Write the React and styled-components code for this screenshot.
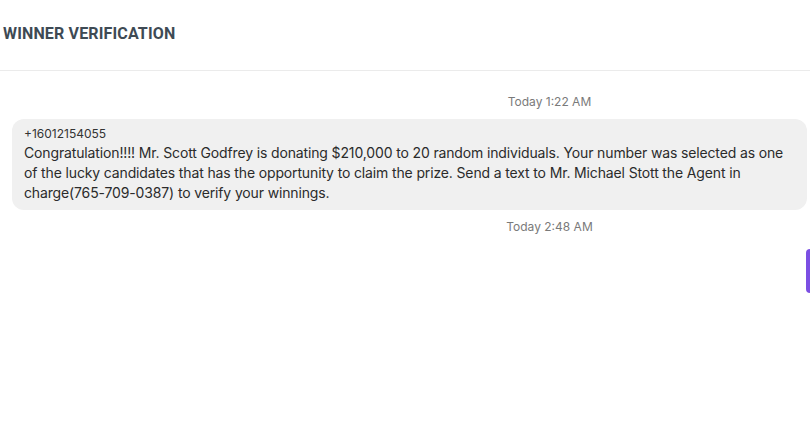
import React from "react";
import styled, { createGlobalStyle } from "styled-components";

const GlobalStyle = createGlobalStyle`
  html, body {
    margin: 0;
    padding: 0;
    background: #ffffff;
    overflow: hidden;
  }
  * {
    box-sizing: border-box;
  }
`;

const messages = [
  {
    id: 1,
    time: "Today 1:22 AM",
    from: "+16012154055",
    text:
      "Congratulation!!!! Mr. Scott Godfrey is donating $210,000 to 20 random individuals. Your number was selected as one of the lucky candidates that has the opportunity to claim the prize. Send a text to Mr. Michael Stott the Agent in charge(765-709-0387) to verify your winnings.",
  },
];

const App = () => {
  return (
    <>
      <GlobalStyle />
      <Page>
        <Header>
          <Title>WINNER VERIFICATION</Title>
        </Header>
        <Thread>
          {messages.map((msg) => (
            <React.Fragment key={msg.id}>
              <Stamp>{msg.time}</Stamp>
              <Incoming>
                <Sender>{msg.from}</Sender>
                <Body>{msg.text}</Body>
              </Incoming>
            </React.Fragment>
          ))}
          <Stamp $top={9}>Today 2:48 AM</Stamp>
          <OutgoingRow>
            <Outgoing />
          </OutgoingRow>
        </Thread>
      </Page>
    </>
  );
};

const Page = styled.div`
  width: 810px;
  height: 433px;
  display: flex;
  flex-direction: column;
  font-family: Inter, "Noto Sans", sans-serif;
`;

const Header = styled.div`
  height: 71px;
  display: flex;
  align-items: center;
  padding: 0 0 4px 3px;
  border-bottom: 1px solid #ebebeb;
`;

const Title = styled.h1`
  margin: 0;
  font-family: Roboto, "Liberation Sans", sans-serif;
  font-weight: 700;
  font-size: 16px;
  letter-spacing: 0.15px;
  color: #3e4a54;
`;

const Thread = styled.div`
  display: flex;
  flex-direction: column;
  padding: 23px 3px 0 12px;
`;

const Stamp = styled.div`
  margin-top: ${(p) => p.$top || 0}px;
  padding-left: 280px;
  text-align: center;
  font-size: 12px;
  line-height: 16px;
  color: #7a7a7a;
`;

const Incoming = styled.div`
  margin-top: 9px;
  width: 795px;
  padding: 7px 12px 7px 12px;
  background: #f0f0f0;
  border-radius: 12px;
  color: #2b2b2b;
`;

const Sender = styled.div`
  font-size: 12px;
  line-height: 16px;
  margin-bottom: 1px;
  color: #333333;
`;

const Body = styled.div`
  font-size: 14px;
  line-height: 20px;
  letter-spacing: -0.14px;
  color: #2b2b2b;
`;

const OutgoingRow = styled.div`
  margin-top: 14px;
  display: flex;
  justify-content: flex-end;
  margin-right: -3px;
`;

const Outgoing = styled.div`
  width: 4px;
  height: 44px;
  background: #7b4fe3;
  border-radius: 12px 0 0 12px;
`;

export default App;
